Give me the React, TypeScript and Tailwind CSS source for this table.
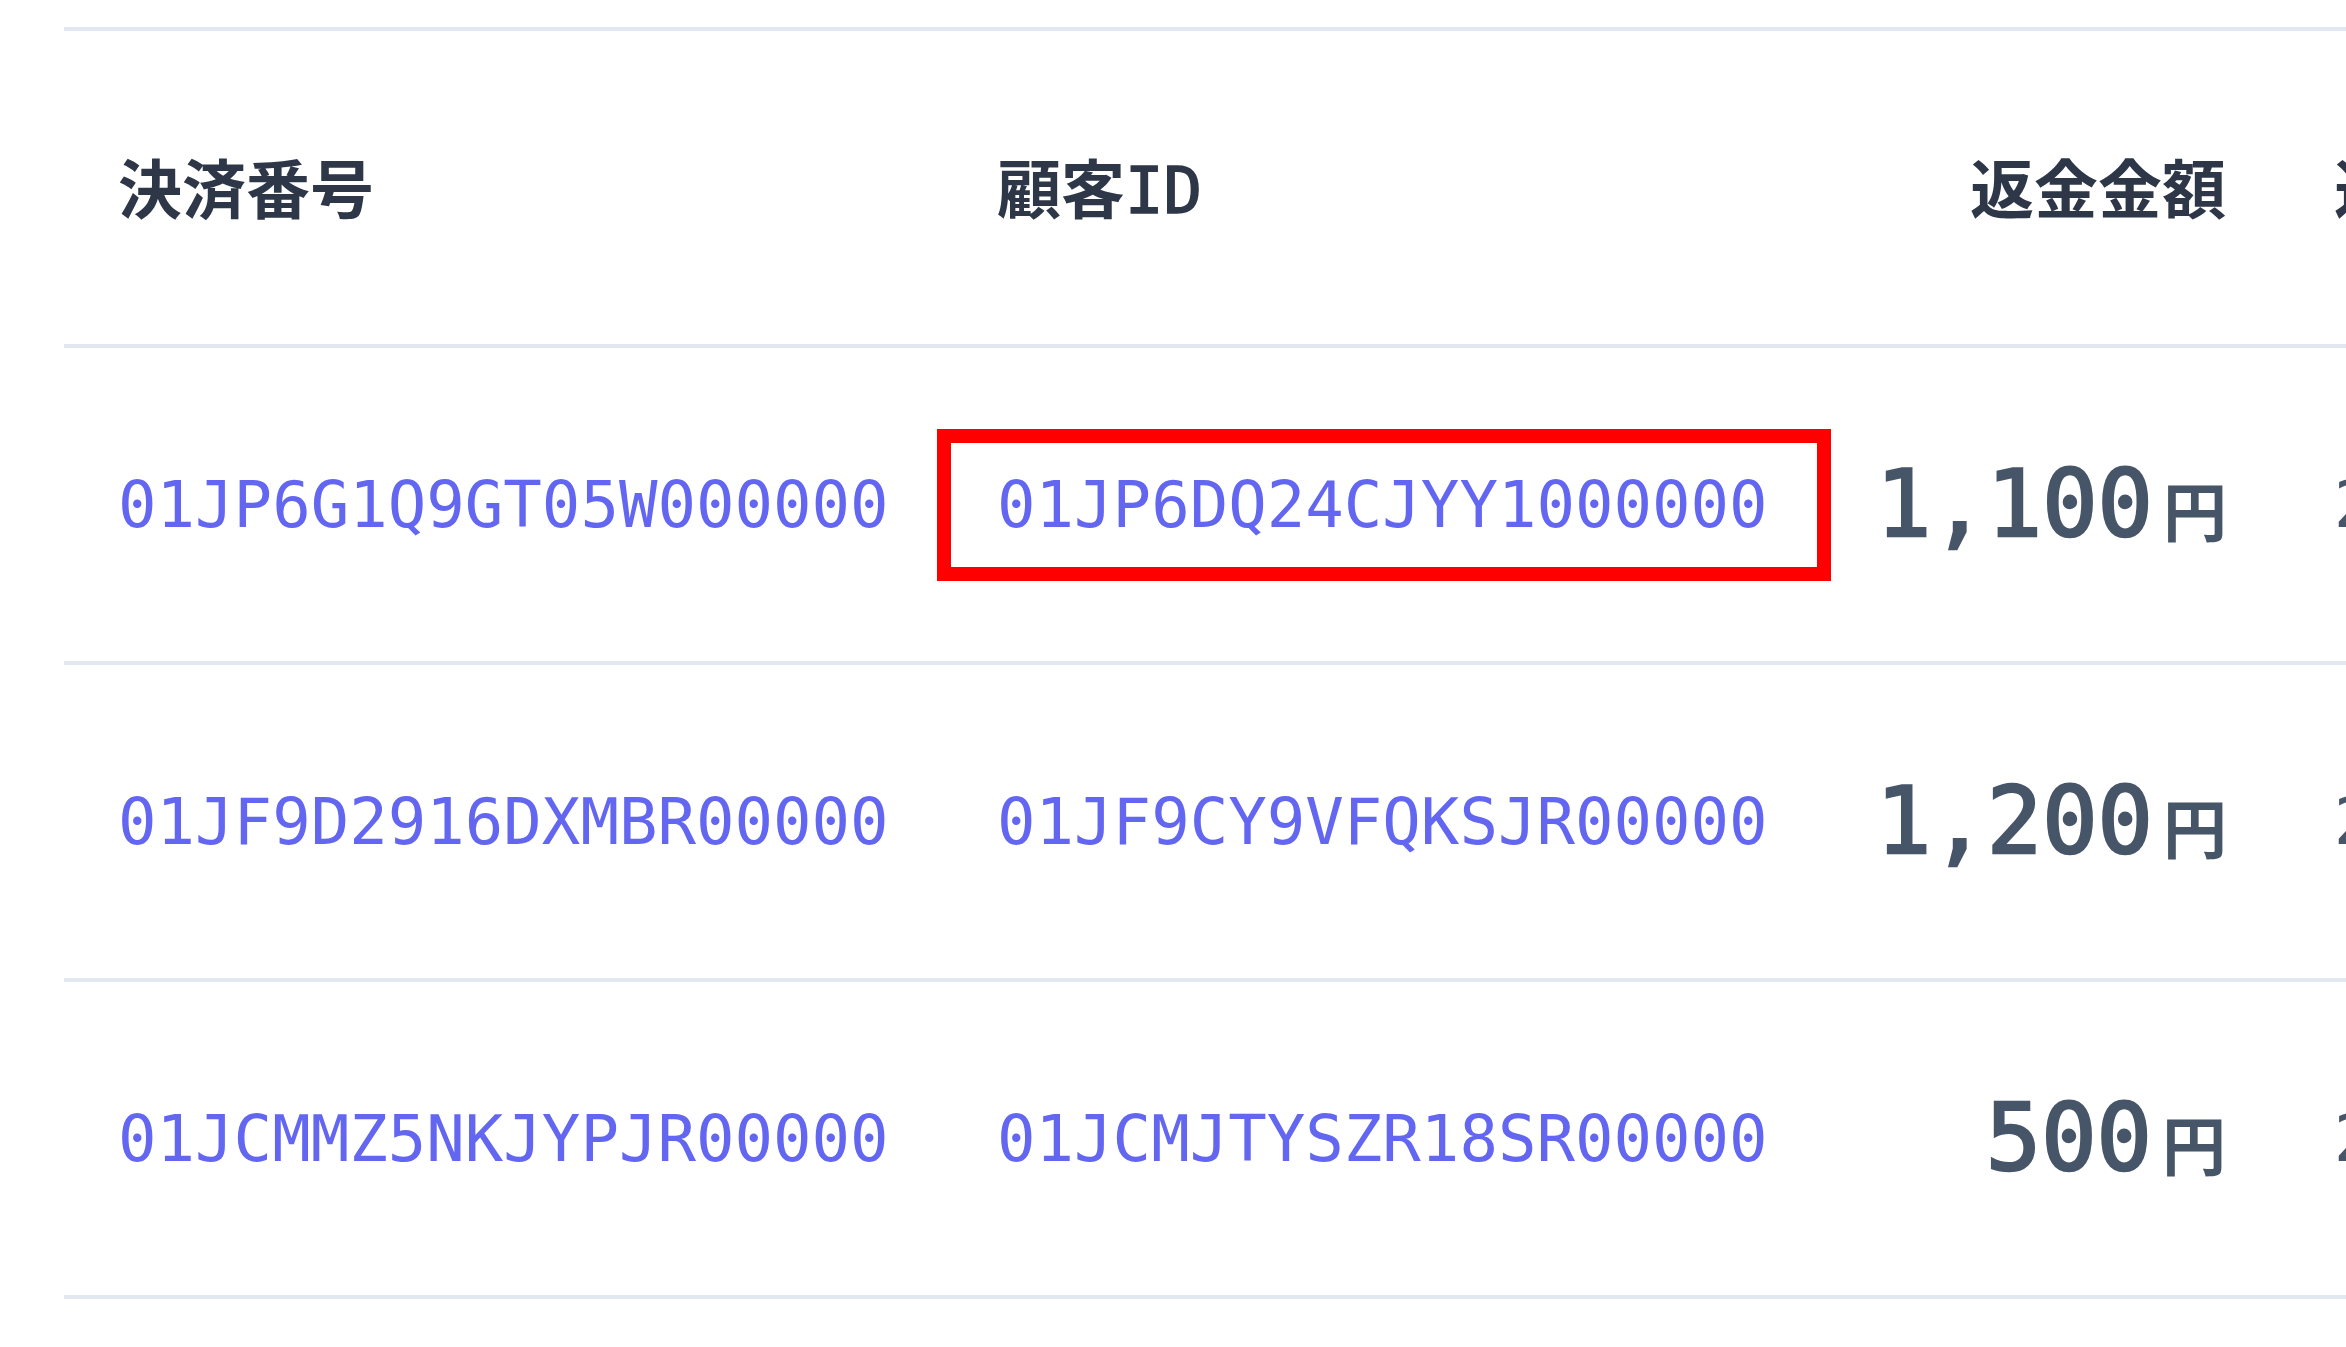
const refunds = [
  {
    paymentId: "01JP6G1Q9GT05W000000",
    customerId: "01JP6DQ24CJYY1000000",
    amount: "1,100",
    date: "2025/03/14 10:21",
    highlight: true,
  },
  {
    paymentId: "01JF9D2916DXMBR00000",
    customerId: "01JF9CY9VFQKSJR00000",
    amount: "1,200",
    date: "2024/12/02 16:48",
  },
  {
    paymentId: "01JCMMZ5NKJYPJR00000",
    customerId: "01JCMJTYSZR18SR00000",
    amount: "500",
    date: "2024/11/12 09:05",
  },
];

export default function App() {
  return (
    <div className="h-screen w-full overflow-hidden bg-white pl-[64px] pt-[27px] font-['DejaVu_Sans_Mono','Noto_Sans_CJK_JP',monospace] leading-[normal] slashed-zero">
      <div className="w-max border-t-4 border-[#e2e8f0]">
        {/* Header */}
        <div className="flex h-[317px] items-center border-b-4 border-[#e2e8f0] pb-[6px] text-[64px] text-[#2d3748]">
          <div className="w-[879px] shrink-0 px-[54px] font-bold">決済番号</div>
          <div className="w-[879px] shrink-0 px-[54px]">
            <span className="font-bold">顧客</span>
            <span className="[-webkit-text-stroke:1.5px_currentColor]">ID</span>
          </div>
          <div className="w-[458px] shrink-0 px-[54px] text-right font-bold">返金金額</div>
          <div className="w-[700px] shrink-0 px-[54px] font-bold">返金日時</div>
        </div>

        {/* Rows */}
        {refunds.map((r) => (
          <div
            key={r.paymentId}
            className="flex h-[317px] items-center border-b-4 border-[#e2e8f0]"
          >
            <div className="w-[879px] shrink-0 px-[54px] text-[64px] text-[#6366f1]">
              {r.paymentId}
            </div>
            <div className="relative w-[879px] shrink-0 px-[54px] text-[64px] text-[#6366f1]">
              {r.customerId}
              {r.highlight && (
                <span className="pointer-events-none absolute left-[-6px] right-[-9px] top-1/2 h-[152px] -translate-y-1/2 border-[14px] border-[#ff0000]" />
              )}
            </div>
            <div className="w-[458px] shrink-0 whitespace-nowrap px-[54px] text-right text-[#475569]">
              <span className="text-[92px] [-webkit-text-stroke:2.5px_currentColor]">{r.amount}</span>
              <span className="ml-[10px] text-[64px] font-bold">円</span>
            </div>
            <div className="w-[700px] shrink-0 whitespace-nowrap px-[54px] text-[64px] text-[#475569]">
              {r.date}
            </div>
          </div>
        ))}
      </div>
    </div>
  );
}
